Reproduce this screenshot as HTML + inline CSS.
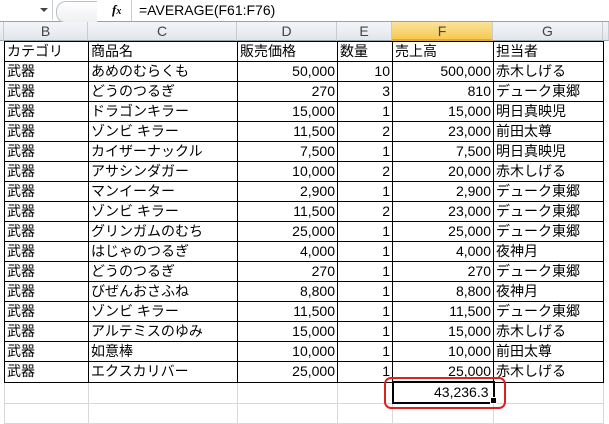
<!DOCTYPE html><html><head><meta charset="utf-8"><style>
body{margin:0;width:609px;height:410px;overflow:hidden;background:#fff;position:relative;font-family:"Liberation Sans","Noto Sans CJK JP",sans-serif;}
.fb{position:absolute;left:0;top:0;width:609px;height:21px;background:#fff;border-bottom:1px solid #9aa3ad;}
.hdr{position:absolute;top:22px;height:19px;background:linear-gradient(#f3f5f8,#e2e6ec);border-right:1px solid #c6ccd4;border-bottom:1px solid #9aa3ad;box-sizing:border-box;text-align:center;font-size:14px;line-height:19px;color:#444;}
table{position:absolute;left:4px;top:41px;border-collapse:collapse;font-size:14px;table-layout:fixed;}
td{height:19px;padding:0 2px;border:1px solid #000;white-space:nowrap;overflow:hidden;line-height:19px;}
td.r{text-align:right}
tr.blank td{border:1px solid #d8d8d8;border-top:1px solid #000}
</style></head><body>
<div class="fb">
<div style="position:absolute;left:0;top:0;width:52px;height:20px;border-right:1px solid #ccc"></div>
<div style="position:absolute;left:40px;top:8px;width:0;height:0;border-left:4px solid transparent;border-right:4px solid transparent;border-top:4px solid #444"></div>
<div style="position:absolute;left:56px;top:1px;width:40px;height:20px;border:1px solid #b9c0c8;border-radius:10px 0 0 10px;border-right:none;background:linear-gradient(#fff,#eef0f3)"></div>
<div style="position:absolute;left:112px;top:2px;font:italic bold 13px 'Liberation Serif',serif;">f<span style="font-size:10px">x</span></div>
<div style="position:absolute;left:131px;top:0;height:21px;border-left:1px solid #ccc"></div>
<div style="position:absolute;left:139px;top:2px;font-size:14px;">=AVERAGE(F61:F76)</div>
</div>
<div class="hdr" style="left:0;width:4px"></div>
<div class="hdr" style="left:4px;width:84px">B</div>
<div class="hdr" style="left:88px;width:149px">C</div>
<div class="hdr" style="left:237px;width:100px">D</div>
<div class="hdr" style="left:337px;width:55px">E</div>
<div class="hdr" style="left:392px;width:101px;background:linear-gradient(#fbe29a,#f6c953);border-bottom:2px solid #e4a83a">F</div>
<div class="hdr" style="left:493px;width:110px">G</div>
<div class="hdr" style="left:603px;width:6px"></div>
<table>
<colgroup><col style="width:84px"><col style="width:149px"><col style="width:100px"><col style="width:55px"><col style="width:101px"><col style="width:110px"></colgroup>
<tr><td>カテゴリ</td><td>商品名</td><td>販売価格</td><td>数量</td><td>売上高</td><td>担当者</td></tr>
<tr><td>武器</td><td>あめのむらくも</td><td class="r">50,000</td><td class="r">10</td><td class="r">500,000</td><td>赤木しげる</td></tr>
<tr><td>武器</td><td>どうのつるぎ</td><td class="r">270</td><td class="r">3</td><td class="r">810</td><td>デューク東郷</td></tr>
<tr><td>武器</td><td>ドラゴンキラー</td><td class="r">15,000</td><td class="r">1</td><td class="r">15,000</td><td>明日真映児</td></tr>
<tr><td>武器</td><td>ゾンビ キラー</td><td class="r">11,500</td><td class="r">2</td><td class="r">23,000</td><td>前田太尊</td></tr>
<tr><td>武器</td><td>カイザーナックル</td><td class="r">7,500</td><td class="r">1</td><td class="r">7,500</td><td>明日真映児</td></tr>
<tr><td>武器</td><td>アサシンダガー</td><td class="r">10,000</td><td class="r">2</td><td class="r">20,000</td><td>赤木しげる</td></tr>
<tr><td>武器</td><td>マンイーター</td><td class="r">2,900</td><td class="r">1</td><td class="r">2,900</td><td>デューク東郷</td></tr>
<tr><td>武器</td><td>ゾンビ キラー</td><td class="r">11,500</td><td class="r">2</td><td class="r">23,000</td><td>デューク東郷</td></tr>
<tr><td>武器</td><td>グリンガムのむち</td><td class="r">25,000</td><td class="r">1</td><td class="r">25,000</td><td>デューク東郷</td></tr>
<tr><td>武器</td><td>はじゃのつるぎ</td><td class="r">4,000</td><td class="r">1</td><td class="r">4,000</td><td>夜神月</td></tr>
<tr><td>武器</td><td>どうのつるぎ</td><td class="r">270</td><td class="r">1</td><td class="r">270</td><td>デューク東郷</td></tr>
<tr><td>武器</td><td>びぜんおさふね</td><td class="r">8,800</td><td class="r">1</td><td class="r">8,800</td><td>夜神月</td></tr>
<tr><td>武器</td><td>ゾンビ キラー</td><td class="r">11,500</td><td class="r">1</td><td class="r">11,500</td><td>デューク東郷</td></tr>
<tr><td>武器</td><td>アルテミスのゆみ</td><td class="r">15,000</td><td class="r">1</td><td class="r">15,000</td><td>赤木しげる</td></tr>
<tr><td>武器</td><td>如意棒</td><td class="r">10,000</td><td class="r">1</td><td class="r">10,000</td><td>前田太尊</td></tr>
<tr><td>武器</td><td>エクスカリバー</td><td class="r">25,000</td><td class="r">1</td><td class="r">25,000</td><td>赤木しげる</td></tr>
<tr class="blank"><td></td><td></td><td></td><td></td><td style="border:2px solid #000;text-align:right;padding-right:4px">43,236.3</td><td></td></tr>
<tr class="blank"><td style="border-top-color:#d8d8d8"></td><td style="border-top-color:#d8d8d8"></td><td style="border-top-color:#d8d8d8"></td><td style="border-top-color:#d8d8d8"></td><td style="border-top-color:#d8d8d8"></td><td style="border-top-color:#d8d8d8"></td></tr>
</table>
<div style="position:absolute;left:490px;top:397px;width:5px;height:5px;background:#000;border:1px solid #fff"></div>
<div style="position:absolute;left:384px;top:377px;width:118px;height:28px;border:2px solid #e02020;border-radius:7px"></div>
</body></html>
